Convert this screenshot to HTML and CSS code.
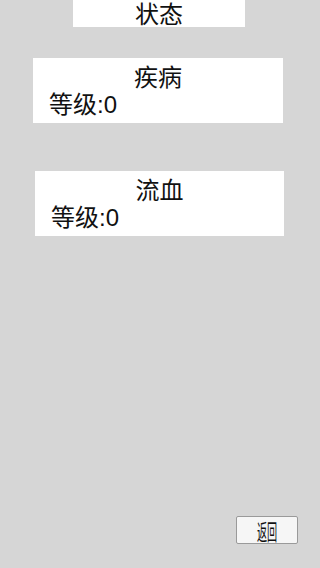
FILE: index.html
```html
<!DOCTYPE html>
<html lang="zh">
<head>
  <meta charset="UTF-8" />
  <meta name="viewport" content="width=device-width, initial-scale=1.0"/>
  <title>状态</title>
  <link rel="stylesheet" href="styles.css">
</head>
<body>

  <div class="page">
    <div class="title">状态</div>

    <div class="card">
      <div class="card-name">疾病</div>
      <div class="card-level">等级:0</div>
    </div>

    <div class="card second">
      <div class="card-name">流血</div>
      <div class="card-level">等级:0</div>
    </div>

    <div class="spacer"></div>

    <div class="footer">
      <button class="back"><span class="back-label">返回</span></button>
    </div>
  </div>

</body>
</html>
```

FILE: styles.css
```css
body {
  margin: 0;
  background: #d6d6d6;
  font-family: "Liberation Sans", "Noto Sans CJK SC", sans-serif;
  color: #111;
}

.page {
  display: flex;
  flex-direction: column;
  height: 568px;
}

.title {
  width: 172px;
  height: 27px;
  margin: 0 0 0 73px;
  background: #fff;
  text-align: center;
  font-size: 24px;
  line-height: 29px;
}

.card {
  width: 250px;
  height: 65px;
  margin: 31px 0 0 33px;
  background: #fff;
  box-sizing: border-box;
  padding-top: 6px;
}

.card.second {
  margin: 48px 0 0 35px;
  width: 249px;
}

.card-name {
  text-align: center;
  font-size: 24px;
  line-height: 27px;
}

.card-level {
  padding-left: 16px;
  font-size: 24px;
  line-height: 27px;
}

.spacer {
  flex: 1;
}

.footer {
  display: flex;
  justify-content: flex-end;
  padding: 0 22px 24px 0;
}

.back {
  width: 62px;
  height: 28px;
  padding: 0;
  background: #f6f6f6;
  border: 1px solid #9a9a9a;
  border-radius: 2px;
  font-family: "Noto Sans CJK SC", sans-serif;
  font-size: 22px;
  line-height: 26px;
  color: #111;
  white-space: nowrap;
}

.back-label {
  display: inline-block;
  transform: scaleX(0.46);
}
```
